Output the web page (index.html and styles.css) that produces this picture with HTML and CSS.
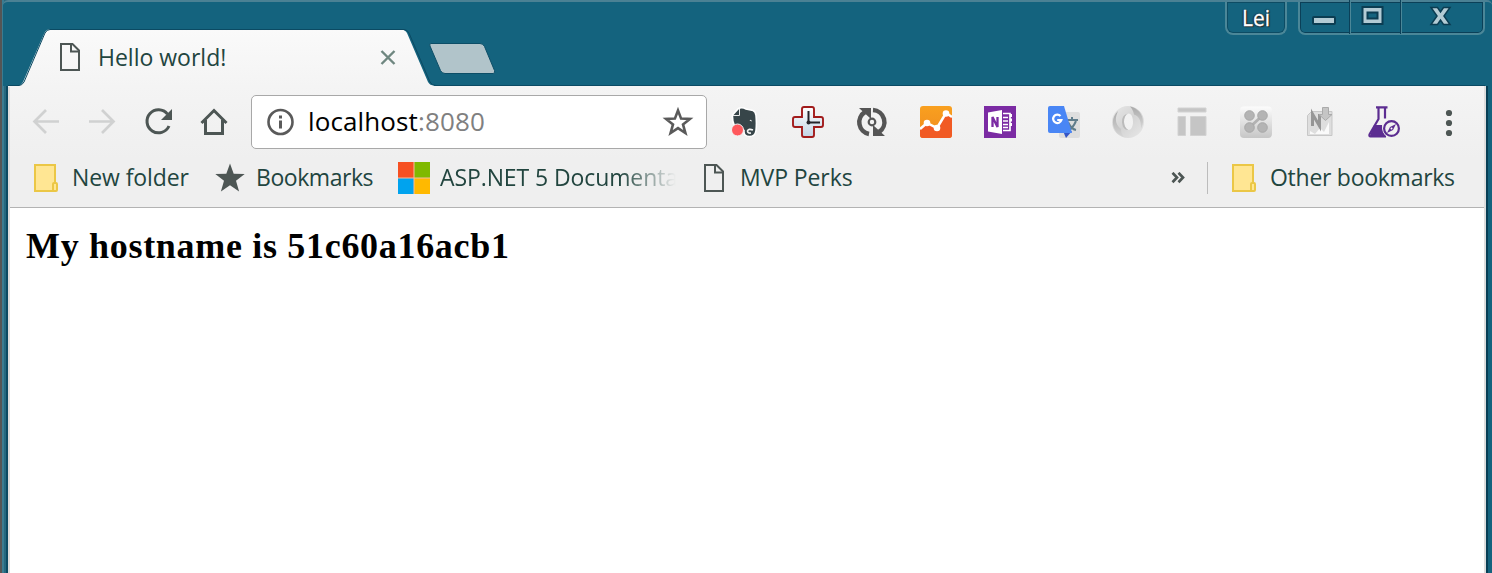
FILE: index.html
```html
<!DOCTYPE html>
<html lang="en">
<head>
<meta charset="utf-8">
<title>Hello world!</title>
<link rel="stylesheet" href="styles.css">
</head>
<body>
<svg class="defs" width="0" height="0">
  <defs>
    <symbol id="page" viewBox="0 0 32 32"><path d="M7 3h11.500l6.500 6.500V29H7z" fill="none" stroke="#4d5654" stroke-width="2"/><path d="M17 3v7.500h8" fill="none" stroke="#4d5654" stroke-width="2"/></symbol>
    <symbol id="folder" viewBox="0 0 32 32"><path d="M5 3h20v26H5z" fill="#ffe693" stroke="#ebc746" stroke-width="2"/><rect x="23" y="21" width="4" height="8" rx="1" fill="#ffe693" stroke="#ebc746" stroke-width="2"/></symbol>
    <linearGradient id="tabfill" x1="0" y1="0" x2="0" y2="1"><stop offset="0" stop-color="#fafafa"/><stop offset="1" stop-color="#f4f4f4"/></linearGradient>
    <linearGradient id="orange" x1="0" y1="0" x2="0" y2="1"><stop offset="0" stop-color="#f9a01f"/><stop offset="1" stop-color="#f08c20"/></linearGradient>
    <linearGradient id="silver" x1="0" y1="0" x2="0" y2="1"><stop offset="0" stop-color="#fff"/><stop offset="1" stop-color="#c2d3e4"/></linearGradient>
    <linearGradient id="gray" x1="0" y1="0" x2="0" y2="1"><stop offset="0" stop-color="#fcfcfc"/><stop offset="1" stop-color="#c6c6c6"/></linearGradient>
    <linearGradient id="ring" x1="0" y1="0" x2="1" y2="1"><stop offset="0" stop-color="#e8e8e8"/><stop offset=".5" stop-color="#d4d4d4"/><stop offset="1" stop-color="#e9e9e9"/></linearGradient>
    <linearGradient id="shade" x1="0" y1="0" x2="0" y2="1"><stop offset="0" stop-color="#aaa"/><stop offset="1" stop-color="#d6d6d6"/></linearGradient>
  </defs>
</svg>
<div class="window">
  <header class="titlebar">
    <div class="tab">
      <svg class="tab-shape" viewBox="0 0 416 58"><path d="M0 56.500h10Q13 56.500 15 53L36 5Q38 .5 41 .5H393Q397 .5 399 4L420 53Q422 56.500 426 56.500V58H0z" fill="url(#tabfill)"/><path d="M0 56.500h11Q14 56.500 16 53L37 4Q39 .5 42 .5H396Q399 .5 401 4L422 53Q424 56.500 428 56.500H1477" fill="none" stroke="#0b4a63"/></svg>
      <svg class="icon tab-icon"><use href="#page"/></svg>
      <span class="tab-title">Hello world!</span>
      <svg class="tab-close" viewBox="0 0 16 16"><path d="M1.500 2l13 13M14.500 2l-13 13" stroke="#6f8780" stroke-width="2.400" fill="none"/></svg>
    </div>
    <svg class="new-tab" viewBox="0 0 68 34"><path d="M3 1.500h49q3 0 4.500 3l10 24q1 3-1.500 3H17q-3 0-4.500-3L2 4Q1 1.500 3 1.500z" fill="#b1c4ca" stroke="#0d4e67"/></svg>
    <div class="user">Lei</div>
    <div class="controls">
      <svg width="49" height="34" viewBox="0 0 49 34"><rect x="13" y="17" width="22" height="7" rx="1" fill="#b3cbd4" stroke="#0b3d52" stroke-width="2"/></svg>
      <svg width="51" height="34" viewBox="0 0 49 34"><path d="M12 7h20v17H12zM17 12.500h10v6H17z" fill="#b3cbd4" fill-rule="evenodd" stroke="#0b3d52" stroke-width="2"/></svg>
      <svg width="83" height="34" viewBox="0 0 81 34"><path d="M29.500 7.500h6.500l3 4.500 3-4.500h6.500l-6 8.500 6 8.500H42l-3-4.500-3 4.500h-6.500l6-8.500z" fill="#b3cbd4" stroke="#0b3d52" stroke-width="1.500"/></svg>
    </div>
  </header>
  <main class="client">
    <div class="chrome">
      <nav class="toolbar">
        <div class="nav-buttons">
          <svg class="icon" viewBox="0 0 32 32"><path d="M29 15.500H5M16 4L4.500 15.500 16 27" fill="none" stroke="#d0d1d1" stroke-width="2.700"/></svg>
          <svg class="icon" viewBox="0 0 32 32"><path d="M3 15.500h24M16 4l11.500 11.500L16 27" fill="none" stroke="#d0d1d1" stroke-width="2.700"/></svg>
          <svg class="icon" viewBox="0 0 32 32"><path d="M25.500 8.100A11.500 11.500 0 1 0 27 20" fill="none" stroke="#4d5654" stroke-width="3"/><path d="M30 3v11H19z" fill="#4d5654"/></svg>
          <svg class="icon" viewBox="0 0 32 32"><path d="M3.500 17L16 4.500 28.500 17M7.500 14v13.500h17V14" fill="none" stroke="#4d5654" stroke-width="3"/></svg>
        </div>
        <div class="address">
          <svg class="info" viewBox="0 0 28 28"><circle cx="14.500" cy="14" r="12" fill="none" stroke="#5a5a5a" stroke-width="2.600"/><path d="M13 7.500h3v3h-3zM13 12.500h3v8h-3z" fill="#5a5a5a"/></svg>
          <span class="url">localhost<span class="port">:8080</span></span>
          <svg class="fav" viewBox="0 0 32 32"><path d="M16 4.500l3.100 8.100 8.800.4-6.900 5.400 2.400 8.600-7.400-4.900L8.600 27l2.400-8.600L4.100 13l8.800-.4z" fill="none" stroke="#5a5a5a" stroke-width="2.600"/></svg>
        </div>
        <div class="extensions">
          <svg class="icon" viewBox="0 0 32 32"><path d="M4.500 9L10.500 2.500Q14 .8 18 3l7 1.500q2.500 1 3 5 .8 8 0 15-.8 6-6.500 6-6 0-5.500-6l-3-2Q4 23 4.500 9z" fill="#374549" stroke="#fff" stroke-width="1.600"/><path d="M5 9.500h6.500V3" fill="none" stroke="#e8eaea" stroke-width="1"/><path d="M25 24q-4.500-1.800-5.500 1 .2 2.500 3.500 2" fill="none" stroke="#f4f4f4" stroke-width="1.700"/><path d="M21.500 14.500q1.500-2 2.500 1z" fill="#f4f4f4"/><circle cx="9.500" cy="24" r="6" fill="#ff585c" stroke="#f4f4f4"/></svg>
          <svg class="icon" viewBox="0 0 32 32"><path d="M12 1h8q2 0 2 2v8h7q2 0 2 2v6q0 2-2 2h-7v8q0 2-2 2h-8q-2 0-2-2v-8H3q-2 0-2-2v-6q0-2 2-2h7V3q0-2 2-2z" fill="url(#silver)" stroke="#a11b1b" stroke-width="1.900"/><path d="M16.500 5v11.500H28" fill="none" stroke="#24242b" stroke-width="2"/><circle cx="16.500" cy="16.500" r="2" fill="#24242b"/></svg>
          <svg class="icon" viewBox="0 0 32 32"><path d="M9 6A12 12 0 0 0 13 28M17 4A12 12 0 0 1 23 26" fill="none" stroke="#555" stroke-width="4.500"/><path d="M3 2h12v11zM17 19v11h12z" fill="#555"/><circle cx="16" cy="16" r="3.300" fill="none" stroke="#555" stroke-width="2.200"/></svg>
          <svg class="icon" viewBox="0 0 32 32"><rect width="32" height="32" rx="3" fill="url(#orange)"/><path d="M0 22l7-5 10 5L26 7l6 4v18q0 3-3 3H3q-3 0-3-3z" fill="#f15a24"/><path d="M0 23l7-6 10 5 9-15 6 4" fill="none" stroke="#fff" stroke-width="2.500"/><g fill="#fff"><circle cx="7" cy="17" r="3.300"/><circle cx="17" cy="22" r="3.300"/><circle cx="26" cy="7.500" r="3.300"/></g></svg>
          <svg class="icon" viewBox="0 0 32 32"><path d="M0 0h32v32H0z" fill="#7b2ba3"/><path d="M4 6.500L18 4v24L4 25.500z" fill="#fff"/><path d="M19 7.500h7v17h-7M19 11.500h5M19 15h5M19 18.500h5M19 21.500h5" fill="none" stroke="#fff" stroke-width="1.700"/><path d="M26 9.500h2M26 14h2M26 18.500h2" stroke="#fff" stroke-width="3.200"/><path d="M8.500 21V11l5 10V11" fill="none" stroke="#7b2ba3" stroke-width="2.300"/></svg>
          <svg class="icon" viewBox="0 0 32 32"><rect x="11" y="6" width="21" height="26" rx="2" fill="#dedede"/><path d="M19 14h11M24 11v3M28 15q-3 7-8 10M20 16q3 7 8 8" fill="none" stroke="#607d8b" stroke-width="2"/><path d="M15 25h9l-6 7z" fill="#3455c5"/><path d="M2 0h14l8 27H2q-2 0-2-2V2Q0 0 2 0z" fill="#4986f5"/><path d="M12.500 10A4.200 4.200 0 1 0 13.400 14H9.200" fill="none" stroke="#fff" stroke-width="2.200"/></svg>
          <svg class="icon" viewBox="0 0 32 32"><path d="M16 0a16 16 0 1 0 0 32 16 16 0 1 0 0-32zM16.500 7.500c3 0 4.500 4 4.500 8.500s-2 8-4.500 8-4.500-3.500-4.500-8 1.500-8.500 4.500-8.500z" fill="url(#ring)" fill-rule="evenodd"/><path d="M18 .5c11 2 16 14 11 22 0-9-2-12-7-14-1-4-2-6-4-8z" fill="url(#shade)"/><path d="M12 31C-1 26-2 12 6 5 2 14 4 19 9 23c0 4 1 6 3 8z" fill="url(#shade)"/><path d="M16.500 7.500q-7 1-6.500 9 1 8 6.500 7.500-4-2-4.500-8 0-7 4.500-8.500z" fill="#bbb"/></svg>
          <svg class="icon" viewBox="0 0 32 32"><g fill="#c5c5c5" stroke="#d2d2d2"><path d="M2 2h28v4H2zM2 10.500h7.500v19H2zM14.500 10.500h15.500v19H14.500z"/></g></svg>
          <svg class="icon" viewBox="0 0 32 32"><rect width="32" height="31.500" rx="4" y=".5" fill="url(#gray)"/><path d="M10 21L22 10" stroke="#b2b2b2" stroke-width="3"/><g fill="#b4b4b4" stroke="#a8a8a8"><circle cx="9.500" cy="9.500" r="4.800"/><circle cx="22.500" cy="9.500" r="4.800"/><circle cx="9.500" cy="21.500" r="4.800"/><circle cx="22.500" cy="21.500" r="4.800"/></g></svg>
          <svg class="icon" viewBox="0 0 32 32"><path d="M3.500 29.500v-20l4-4H28v24z" fill="#dedede" stroke="#c7c7c7"/><path d="M6 25l5 3 5-6 4 4 5-10v12H6z" fill="#fafafa"/><path d="M8.500 20V8l7 12V8" fill="none" stroke="#969696" stroke-width="3"/><path d="M18.500 1.500h6v7h3.500l-6.500 6-6.500-6h3.500z" fill="#c5c5c5" stroke="#aaa"/></svg>
          <svg class="icon" viewBox="0 0 32 32"><path d="M8 1.300h11.500M10.500 1v12L1.500 28.500q-.5 2 1 2H18M17 1v11.500" fill="none" stroke="#5c2d91" stroke-width="2.200"/><path d="M6 19h8q0 7 4 11H2z" fill="#5c2d91"/><circle cx="23.500" cy="22.500" r="9.300" fill="#f2f2f2"/><circle cx="23.500" cy="22.500" r="7.400" fill="none" stroke="#5c2d91" stroke-width="2.200"/><path d="M28 18l-3 6-6 3 3-6z" fill="#5c2d91"/><circle cx="23.500" cy="22.500" r="1" fill="#fff"/></svg>
        </div>
        <svg class="icon menu" viewBox="0 0 32 32"><g fill="#4d5654"><circle cx="16" cy="7" r="3.100"/><circle cx="16" cy="17" r="3.100"/><circle cx="16" cy="27" r="3.100"/></g></svg>
      </nav>
      <div class="bookmarks">
        <div class="bookmark"><svg class="icon"><use href="#folder"/></svg><span class="label">New folder</span></div>
        <div class="bookmark"><svg class="icon" viewBox="0 0 32 32"><path d="M16 1.500l3.700 10.300 11 .3-8.700 6.700 3.100 10.700L16 23.300 6.900 29.500 10 18.800 1.300 12.100l11-.3z" fill="#4d5654"/></svg><span class="label tight">Bookmarks</span></div>
        <div class="bookmark"><svg class="icon" viewBox="0 0 32 32"><path d="M0 0h32v32H0z" fill="#f8bd9e"/><path d="M0 0h15.500v15.500H0z" fill="#f65022"/><path d="M16.500 0H32v15.500H16.500z" fill="#7fb900"/><path d="M0 16.500h15.500V32H0z" fill="#00a3ee"/><path d="M16.500 16.500H32V32H16.500z" fill="#ffb900"/></svg><span class="label fade">ASP.NET 5 Documenta</span></div>
        <div class="bookmark"><svg class="icon"><use href="#page"/></svg><span class="label">MVP Perks</span></div>
        <div class="others">
          <svg class="more" viewBox="0 0 14 12"><path d="M1.500 .8L6 5.500l-4.500 4.700M7.500 .8L12 5.500l-4.500 4.700" fill="none" stroke="#4d5654" stroke-width="2.700"/></svg>
          <span class="separator"></span>
          <svg class="icon"><use href="#folder"/></svg><span class="label other-label">Other bookmarks</span>
        </div>
      </div>
    </div>
    <section class="page"><h1 class="heading">My hostname is 51c60a16acb1</h1></section>
  </main>
</div>
</body>
</html>
```
FILE: styles.css
```css
* { box-sizing: border-box; }
body { margin: 0; overflow: hidden; font-family: "Open Sans", "Noto Sans", sans-serif; }
.defs { position: absolute; }
svg { display: block; flex: none; }
.window {
  height: 573px;
  padding: 0 6px 0 8px;
  display: flex;
  flex-direction: column;
  background: linear-gradient(90deg, #555 0 2px, #3b7c91 2px 4px, #25687f 4px 6px, #0c4a62 6px 8px, #14637e 8px 1486px, #083f55 1486px 1488px, #14637e 1488px);
}
.titlebar {
  height: 86px;
  margin: 0 -6px 0 -5px;
  padding: 0 2px 0 5px;
  border-top: 2px solid #4b8194;
  border-radius: 5px 5px 0 0;
  background: #14637e;
  display: flex;
  align-items: flex-start;
}
.tab {
  position: relative;
  width: 420px;
  height: 56px;
  margin-top: 27px;
  padding-left: 46px;
  display: flex;
  align-items: center;
}
.tab-shape { position: absolute; left: 0; top: 0; width: 416px; height: 58px; overflow: visible; }
.icon { width: 32px; height: 32px; }
.tab-icon { position: relative; }
.tab-title { position: relative; width: 282px; margin-left: 12px; font-size: 23px; line-height: 30px; color: #22453f; white-space: nowrap; }
.tab-close { position: relative; width: 16px; height: 16px; }
.new-tab { width: 68px; height: 34px; margin-top: 40px; }
.user {
  width: 62px;
  height: 33px;
  margin-left: auto;
  border: 2px solid #4b8798;
  border-top: 0;
  border-radius: 0 0 8px 8px;
  box-shadow: inset 0 0 0 1px #0d4c64;
  text-align: center;
  font: 21px/32px "Open Sans", sans-serif;
  color: #fff;
  -webkit-text-stroke: 0.3px #fff;
  text-shadow: 0 0 2px #222, 1px 1px 1px #222, -1px 0 1px #222;
}
.controls {
  height: 33px;
  width: 187px;
  margin: 0 5px 0 11px;
  display: flex;
  border: 2px solid #4b8798;
  border-top: 0;
  border-radius: 0 0 7px 7px;
  box-shadow: inset 0 0 0 1px #0b4058;
}
.controls svg { margin-top: -2px; }
.controls svg + svg { border-left: 1px solid #0b4058; box-shadow: inset 1px 0 #4b8798; }
.client { flex: 1; border: 2px solid #ddd; border-width: 0 2px; background: #fff; }
.chrome { height: 122px; background: linear-gradient(#f4f4f4, #efefef 72px); border-bottom: 1px solid #b3b3b3; }
.toolbar { height: 72px; padding-left: 20px; display: flex; align-items: center; }
.nav-buttons { display: flex; gap: 24px; }
.address {
  width: 456px;
  height: 54px;
  margin: 0 21px;
  padding: 0 12px 0 14px;
  display: flex;
  align-items: center;
  background: #fff;
  border: 1px solid #a8a8a8;
  border-radius: 5px;
}
.info { width: 28px; height: 28px; }
.url { margin: 0 0 2px 14px; font-size: 26px; line-height: 36px; letter-spacing: 0.12px; }
.port { color: #808080; }
.fav { width: 32px; height: 32px; margin-left: auto; }
.extensions { display: flex; gap: 32px; }
.menu { margin-left: 33px; }
.bookmarks { height: 40px; padding: 0 29px 0 20px; display: grid; grid-template-columns: 184px 184px 300px 180px 1fr; align-items: center; }
.bookmark, .others { display: flex; align-items: center; }
.others { justify-content: flex-end; }
.label { margin: 0 0 2px 10px; font-size: 23px; line-height: 32px; letter-spacing: -0.1px; color: #22453f; white-space: nowrap; }
.tight { letter-spacing: -0.45px; }
.fade { letter-spacing: -0.1px; -webkit-mask-image: linear-gradient(90deg, #000 180px, transparent 236px); mask-image: linear-gradient(90deg, #000 180px, transparent 236px); }
.more { width: 14px; height: 12px; margin-right: 22px; }
.separator { width: 1px; height: 32px; margin-right: 20px; background: #bcbcbc; }
.other-label { width: 185px; letter-spacing: -0.27px; }
.page { padding: 16px; }
.heading { margin: 0; font: bold 36px/44px "Liberation Serif", serif; letter-spacing: 0.69px; }
```
